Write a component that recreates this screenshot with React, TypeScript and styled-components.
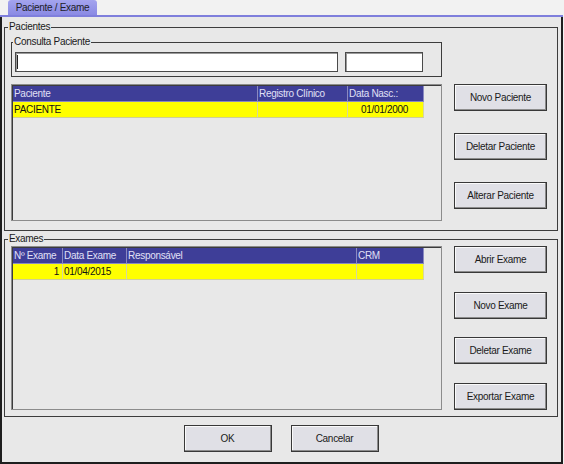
import styled, { createGlobalStyle } from 'styled-components'

const GlobalStyle = createGlobalStyle`
  body {
    margin: 0;
    background: #f2f2f2;
    font-family: 'Liberation Sans', Arial, sans-serif;
    font-size: 10px;
    letter-spacing: -0.3px;
    color: #1a1a1a;
  }
`

type Column = { title: string; width: number; align?: 'left' | 'center' | 'right' }

const pacienteCols: Column[] = [
  { title: 'Paciente', width: 245 },
  { title: 'Registro Clínico', width: 90 },
  { title: 'Data Nasc.:', width: 76, align: 'center' },
]

const exameCols: Column[] = [
  { title: 'Nº Exame', width: 50, align: 'right' },
  { title: 'Data Exame', width: 64 },
  { title: 'Responsável', width: 230 },
  { title: 'CRM', width: 67 },
]

const DataGrid = ({ cols, row, height }: { cols: Column[]; row: string[]; height: number }) => (
  <GridBox $height={height}>
    <GridTable $cols={cols.map((c) => `${c.width}px`).join(' ')}>
      {cols.map((c) => (
        <HeadCell key={c.title}>{c.title}</HeadCell>
      ))}
      {row.map((v, i) => (
        <Cell
          key={i}
          $align={cols[i].align || 'left'}>
          {v}
        </Cell>
      ))}
    </GridTable>
  </GridBox>
)

export default function App() {
  return (
    <Page>
      <GlobalStyle />
      <TabStrip>
        <Tab>Paciente / Exame</Tab>
      </TabStrip>
      <TabLine />
      <Panel>
        <GroupBox $pt={3} $pb={9}>
          <Legend $offset={-3}>Pacientes</Legend>
          <Column>
            <SearchBox>
              <Legend $offset={-2}>Consulta Paciente</Legend>
              <InputRow>
                <TextInput $width={323}>
                  <Caret />
                </TextInput>
                <TextInput $width={78} />
              </InputRow>
            </SearchBox>
            <Row>
              <DataGrid
                cols={pacienteCols}
                row={['PACIENTE', '', '01/01/2000']}
                height={137}
              />
              <ButtonCol $gap={22}>
                <Button>Novo Paciente</Button>
                <Button>Deletar Paciente</Button>
                <Button>Alterar Paciente</Button>
              </ButtonCol>
            </Row>
          </Column>
        </GroupBox>
        <GroupBox
          $pt={1}
          $pb={6}
          $mt={2}>
          <Legend $offset={-3}>Exames</Legend>
          <Row>
            <DataGrid
              cols={exameCols}
              row={['1', '01/04/2015', '', '']}
              height={164}
            />
            <ButtonCol $spread>
              <Button>Abrir Exame</Button>
              <Button>Novo Exame</Button>
              <Button>Deletar Exame</Button>
              <Button>Exportar Exame</Button>
            </ButtonCol>
          </Row>
        </GroupBox>
        <Footer>
          <Button $width={88}>OK</Button>
          <Button $width={88}>Cancelar</Button>
        </Footer>
      </Panel>
    </Page>
  )
}

const Page = styled.div`
  width: 563px;
  height: 464px;
`

const TabStrip = styled.div`
  display: flex;
  height: 15px;
  padding-left: 8px;
`

const Tab = styled.div`
  width: 89px;
  display: flex;
  align-items: center;
  justify-content: center;
  border-radius: 3px 3px 0 0;
  background: linear-gradient(#a4a4ee, #8a8ae4);
  color: #202028;
  font-size: 10px;
`

const TabLine = styled.div`
  height: 2px;
  background: #7f7fdc;
`

const Panel = styled.div`
  box-sizing: border-box;
  height: 447px;
  padding: 4px 3px 8px 2px;
  background: #e8e8e8;
  border: 2px solid #1e1e1e;
  border-top: none;
  display: flex;
  flex-direction: column;
`

const GroupBox = styled.fieldset<{ $pt: number; $pb: number; $mt?: number }>`
  box-sizing: border-box;
  width: 554px;
  margin: ${(p) => p.$mt || 0}px 0 0 0;
  padding: ${(p) => p.$pt}px 10px ${(p) => p.$pb}px 6px;
  border: 1px solid #3c3c3c;
  min-inline-size: 0;
`

const Legend = styled.legend<{ $offset: number }>`
  margin-left: ${(p) => p.$offset}px;
  padding: 0 1px;
  line-height: 12px;
  font-size: 10px;
`

const SearchBox = styled.fieldset`
  box-sizing: border-box;
  width: 431px;
  margin: 0;
  padding: 4px 0 4px 3px;
  border: 1px solid #3c3c3c;
  min-inline-size: 0;
`

const Column = styled.div`
  display: flex;
  flex-direction: column;
  gap: 7px;
`

const Row = styled.div`
  display: flex;
  gap: 12px;
`

const InputRow = styled.div`
  display: flex;
  gap: 7px;
`

const TextInput = styled.div<{ $width: number }>`
  box-sizing: border-box;
  width: ${(p) => p.$width}px;
  height: 20px;
  background: #fff;
  border: 1px solid #4a4a4a;
  box-shadow: inset 1px 1px 0 #9a9a9a;
  display: flex;
  align-items: center;
  padding-left: 1px;
`

const Caret = styled.span`
  width: 1px;
  height: 14px;
  background: #222;
`

const GridBox = styled.div<{ $height: number }>`
  box-sizing: border-box;
  width: 431px;
  height: ${(p) => p.$height}px;
  border: 1px solid #8c8c8c;
  box-shadow: inset 1px 1px 0 #3c3c3c;
  padding: 1px 0 0 1px;
  background: #e8e8e8;
`

const GridTable = styled.div<{ $cols: string }>`
  display: grid;
  grid-template-columns: ${(p) => p.$cols};
  grid-auto-rows: 16px;
`

const HeadCell = styled.div`
  background: #3e3e98;
  color: #e0e0f6;
  border-right: 1px solid #8a8ac0;
  border-bottom: 1px solid #8a8ac0;
  padding-left: 1px;
  line-height: 15px;
  white-space: nowrap;
  overflow: hidden;
`

const Cell = styled.div<{ $align: string }>`
  background: #ffff00;
  border-right: 1px solid #d6d6a0;
  border-bottom: 1px solid #cfcf96;
  padding: 0 3px 0 1px;
  line-height: 16px;
  text-align: ${(p) => p.$align};
  color: #111;
`

const ButtonCol = styled.div<{ $gap?: number; $spread?: boolean }>`
  display: flex;
  flex-direction: column;
  gap: ${(p) => p.$gap || 0}px;
  justify-content: ${(p) => (p.$spread ? 'space-between' : 'flex-start')};
`

const Button = styled.button<{ $width?: number }>`
  box-sizing: border-box;
  width: ${(p) => p.$width || 93}px;
  height: 27px;
  padding: 0;
  background: #e0e0e6;
  border: 1px solid #383838;
  box-shadow: inset -1px -1px 0 #8c8c8c, inset 1px 1px 0 #fafafa;
  font-family: 'Liberation Sans', Arial, sans-serif;
  font-size: 10px;
  letter-spacing: -0.3px;
  color: #1a1a1a;
`

const Footer = styled.div`
  display: flex;
  justify-content: center;
  gap: 19px;
  margin-top: 8px;
`
